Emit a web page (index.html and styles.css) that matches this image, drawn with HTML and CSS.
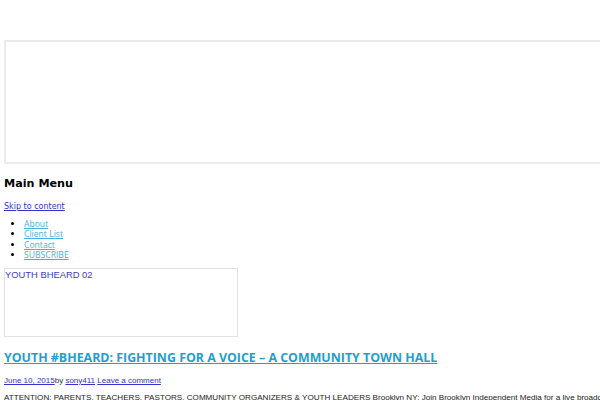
FILE: index.html
```html
<!DOCTYPE html>
<html>
<head>
<meta charset="utf-8">
<link rel="stylesheet" href="styles.css">
</head>
<body>
<div class="page">
  <div class="header-img"></div>
  <h2 class="menu-title">Main Menu</h2>
  <a class="skip" href="#content">Skip to content</a>
  <ul class="menu">
    <li><a href="#">About</a></li>
    <li><a href="#">Client List</a></li>
    <li><a href="#">Contact</a></li>
    <li><a href="#">SUBSCRIBE</a></li>
  </ul>
  <div class="thumb"><a href="#">YOUTH BHEARD 02</a></div>
  <h1 class="post-title"><a href="#">YOUTH #BHEARD: FIGHTING FOR A VOICE – A COMMUNITY TOWN HALL</a></h1>
  <div class="meta"><a href="#">June 10, 2015</a>by <a href="#">sony411</a> <a href="#">Leave a comment</a></div>
  <p class="body-text">ATTENTION: PARENTS, TEACHERS, PASTORS, COMMUNITY ORGANIZERS &amp; YOUTH LEADERS Brooklyn NY: Join Brooklyn Independent Media for a live broadcast town hall meeting.</p>
</div>
</body>
</html>
```
FILE: styles.css
```css
html, body {
  margin: 0;
  padding: 0;
  background: #fff;
  overflow: hidden;
}
.page {
  width: 1000px;
  padding: 40px 4px 0 4px;
  font-family: "DejaVu Sans", sans-serif;
}
.header-img {
  height: 120px;
  border: 2px solid #ebebeb;
  border-right: none;
}
.menu-title {
  margin: 13px 0 0 0;
  font-size: 11.2px;
  line-height: 14px;
  font-weight: bold;
  color: #000;
}
.skip {
  display: block;
  width: max-content;
  margin-top: 11px;
  font-size: 8px;
  line-height: 10px;
  color: #3333cc;
}
.menu {
  margin: 7px 0 0 0;
  padding-left: 20px;
  font-family: "Open Sans", sans-serif;
  font-size: 8.6px;
  line-height: 10.4px;
}
.menu a {
  color: #3fb2dc;
}
.thumb {
  margin-top: 7px;
  width: 232px;
  height: 67px;
  border: 1.5px solid #e2e2e2;
  font-family: "Liberation Sans", sans-serif;
  font-size: 9.4px;
  line-height: 11px;
}
.thumb a {
  color: #3b3bc8;
  text-decoration: none;
}
.post-title {
  margin: 12px 0 0 0;
  font-family: "Open Sans", sans-serif;
  font-size: 12.4px;
  line-height: 18px;
  font-weight: bold;
}
.post-title a {
  color: #1e9fcf;
}
.meta {
  margin-top: 9px;
  font-family: "Liberation Sans", sans-serif;
  font-size: 8px;
  line-height: 10px;
  color: #333;
}
.meta a {
  color: #3333cc;
}
.body-text {
  margin: 6px 0 0 0;
  font-family: "Liberation Sans", sans-serif;
  font-size: 8.1px;
  line-height: 11px;
  color: #222;
  white-space: nowrap;
}
```
